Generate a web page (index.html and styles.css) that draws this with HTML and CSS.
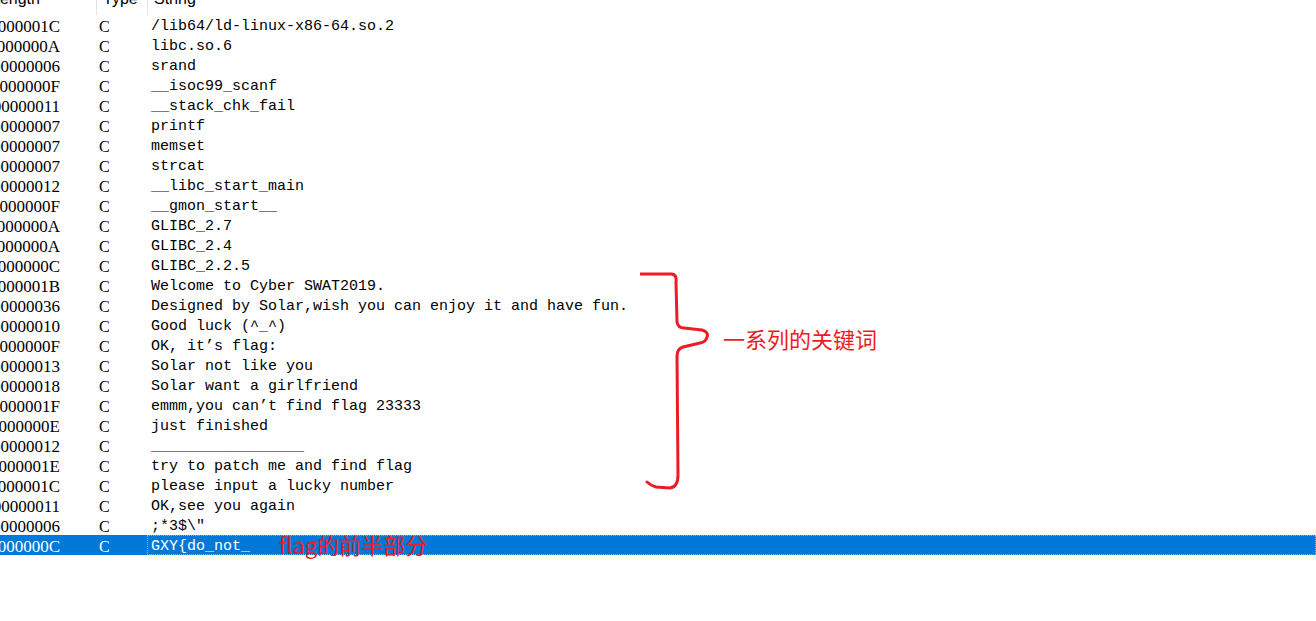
FILE: index.html
```html
<!DOCTYPE html>
<html>
<head>
<meta charset="utf-8">
<link rel="stylesheet" href="styles.css">
</head>
<body>
<div class="page">
  <div class="header">
    <div class="hcell hlen"><span class="htext shift">Length</span></div>
    <div class="hcell htype"><span class="htext">Type</span></div>
    <div class="hcell hstr"><span class="htext">String</span></div>
  </div>
  <div class="rows">
    <div class="row"><div class="len"><span class="lv">0000001C</span></div><div class="type">C</div><div class="str">/lib64/ld-linux-x86-64.so.2</div></div>
    <div class="row"><div class="len"><span class="lv">0000000A</span></div><div class="type">C</div><div class="str">libc.so.6</div></div>
    <div class="row"><div class="len"><span class="lv">00000006</span></div><div class="type">C</div><div class="str">srand</div></div>
    <div class="row"><div class="len"><span class="lv">0000000F</span></div><div class="type">C</div><div class="str">__isoc99_scanf</div></div>
    <div class="row"><div class="len"><span class="lv">00000011</span></div><div class="type">C</div><div class="str">__stack_chk_fail</div></div>
    <div class="row"><div class="len"><span class="lv">00000007</span></div><div class="type">C</div><div class="str">printf</div></div>
    <div class="row"><div class="len"><span class="lv">00000007</span></div><div class="type">C</div><div class="str">memset</div></div>
    <div class="row"><div class="len"><span class="lv">00000007</span></div><div class="type">C</div><div class="str">strcat</div></div>
    <div class="row"><div class="len"><span class="lv">00000012</span></div><div class="type">C</div><div class="str">__libc_start_main</div></div>
    <div class="row"><div class="len"><span class="lv">0000000F</span></div><div class="type">C</div><div class="str">__gmon_start__</div></div>
    <div class="row"><div class="len"><span class="lv">0000000A</span></div><div class="type">C</div><div class="str">GLIBC_2.7</div></div>
    <div class="row"><div class="len"><span class="lv">0000000A</span></div><div class="type">C</div><div class="str">GLIBC_2.4</div></div>
    <div class="row"><div class="len"><span class="lv">0000000C</span></div><div class="type">C</div><div class="str">GLIBC_2.2.5</div></div>
    <div class="row"><div class="len"><span class="lv">0000001B</span></div><div class="type">C</div><div class="str">Welcome to Cyber SWAT2019.</div></div>
    <div class="row"><div class="len"><span class="lv">00000036</span></div><div class="type">C</div><div class="str">Designed by Solar,wish you can enjoy it and have fun.</div></div>
    <div class="row"><div class="len"><span class="lv">00000010</span></div><div class="type">C</div><div class="str">Good luck (^_^)</div></div>
    <div class="row"><div class="len"><span class="lv">0000000F</span></div><div class="type">C</div><div class="str">OK, it’s flag:</div></div>
    <div class="row"><div class="len"><span class="lv">00000013</span></div><div class="type">C</div><div class="str">Solar not like you</div></div>
    <div class="row"><div class="len"><span class="lv">00000018</span></div><div class="type">C</div><div class="str">Solar want a girlfriend</div></div>
    <div class="row"><div class="len"><span class="lv">0000001F</span></div><div class="type">C</div><div class="str">emmm,you can’t find flag 23333</div></div>
    <div class="row"><div class="len"><span class="lv">0000000E</span></div><div class="type">C</div><div class="str">just finished</div></div>
    <div class="row"><div class="len"><span class="lv">00000012</span></div><div class="type">C</div><div class="str">_________________</div></div>
    <div class="row"><div class="len"><span class="lv">0000001E</span></div><div class="type">C</div><div class="str">try to patch me and find flag</div></div>
    <div class="row"><div class="len"><span class="lv">0000001C</span></div><div class="type">C</div><div class="str">please input a lucky number</div></div>
    <div class="row"><div class="len"><span class="lv">00000011</span></div><div class="type">C</div><div class="str">OK,see you again</div></div>
    <div class="row"><div class="len"><span class="lv">00000006</span></div><div class="type">C</div><div class="str">;*3$\″</div></div>
    <div class="row selected"><div class="len"><span class="lv">0000000C</span></div><div class="type">C</div><div class="str focus">GXY{do_not_</div></div>
  </div>

  <div class="note-inline">flag的前半部分</div>
  <svg class="brace" width="80" height="225" viewBox="0 0 80 225">
    <path d="M0,4 L32,4 Q37,5 36,12 L37,52 Q38,58 44,58 L62,60 Q69,62 67,67 Q66,72 60,73 L43,77 Q37,79 37,86 L38,205 Q38,217 30,218 L16,217 Q10,215 7,212" fill="none" stroke="#ec1c24" stroke-width="3" stroke-linecap="round" stroke-linejoin="round"/>
  </svg>
  <div class="note-side">一系列的关键词</div>
</div>
</body>
</html>
```

FILE: styles.css
```css
html, body {
  margin: 0;
  padding: 0;
  background: #ffffff;
}

.page {
  position: relative;
  width: 1316px;
  height: 621px;
  overflow: hidden;
}

.header {
  display: flex;
  height: 15px;
  overflow: hidden;
  font-family: "Liberation Sans", "Noto Sans", sans-serif;
  font-size: 16px;
  color: #000;
}

.hcell {
  height: 15px;
  overflow: hidden;
  box-sizing: border-box;
}

.hlen {
  width: 97px;
  border-right: 1px solid #e3e3e3;
}

.htype {
  width: 51px;
  padding-left: 6px;
  border-right: 1px solid #e3e3e3;
}

.hstr {
  flex: 1;
  padding-left: 6px;
}

.htext {
  display: block;
  line-height: 16px;
  margin-top: -9px;
  white-space: nowrap;
}

.htext.shift {
  margin-left: -9px;
}

.rows {
  display: flex;
  flex-direction: column;
}

.row {
  display: flex;
  height: 20px;
  line-height: 24px;
  color: #000;
}

.len {
  width: 97px;
  flex: none;
  display: flex;
}

.lv {
  width: 60px;
  display: flex;
  justify-content: flex-end;
  white-space: nowrap;
  font-family: "Liberation Serif", serif;
  font-size: 17px;
}

.type {
  width: 48px;
  flex: none;
  padding-left: 2px;
  font-family: "Liberation Serif", serif;
  font-size: 16px;
}

.str {
  flex: 1;
  height: 20px;
  padding-left: 4px;
  font-family: "Liberation Mono", monospace;
  font-size: 15px;
  white-space: pre;
}

.selected {
  background: #0078d7;
  color: #ffffff;
}

.focus {
  outline: 1px dotted #f0a040;
  outline-offset: -1px;
}

.note-inline {
  position: absolute;
  left: 279px;
  top: 529px;
  font-family: "Noto Sans CJK SC", "Liberation Sans", sans-serif;
  font-size: 22px;
  line-height: 30px;
  color: #ec1c24;
  white-space: nowrap;
}

.brace {
  position: absolute;
  left: 640px;
  top: 270px;
}

.note-side {
  position: absolute;
  left: 723px;
  top: 324px;
  font-family: "Noto Sans CJK SC", sans-serif;
  font-size: 22px;
  line-height: 28px;
  color: #ec1c24;
  white-space: nowrap;
}
```
